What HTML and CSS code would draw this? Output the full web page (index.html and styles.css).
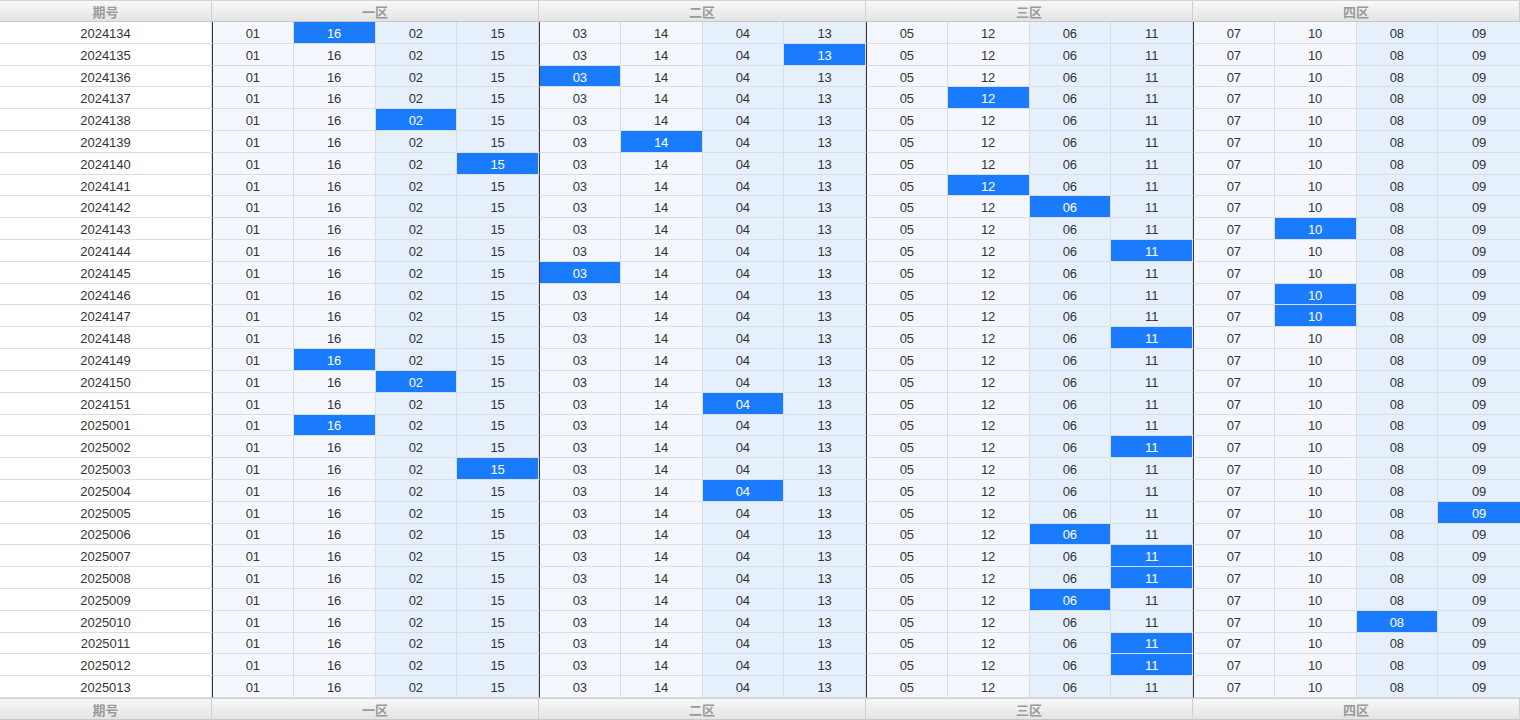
FILE: index.html
```html
<!DOCTYPE html>
<html lang="zh">
<head>
<meta charset="utf-8">
<title>分区走势</title>
<link rel="stylesheet" href="styles.css">
</head>
<body>
<div class="grid">
  <div class="row head">
    <span class="h">期号</span><span class="h g">一区</span><span class="h g">二区</span><span class="h g">三区</span><span class="h g">四区</span>
  </div>
  <div class="row"><span>2024134</span><span>01</span><span class="on">16</span><span>02</span><span>15</span><span>03</span><span>14</span><span>04</span><span>13</span><span>05</span><span>12</span><span>06</span><span>11</span><span>07</span><span>10</span><span>08</span><span>09</span></div>
  <div class="row"><span>2024135</span><span>01</span><span>16</span><span>02</span><span>15</span><span>03</span><span>14</span><span>04</span><span class="on">13</span><span>05</span><span>12</span><span>06</span><span>11</span><span>07</span><span>10</span><span>08</span><span>09</span></div>
  <div class="row"><span>2024136</span><span>01</span><span>16</span><span>02</span><span>15</span><span class="on">03</span><span>14</span><span>04</span><span>13</span><span>05</span><span>12</span><span>06</span><span>11</span><span>07</span><span>10</span><span>08</span><span>09</span></div>
  <div class="row"><span>2024137</span><span>01</span><span>16</span><span>02</span><span>15</span><span>03</span><span>14</span><span>04</span><span>13</span><span>05</span><span class="on">12</span><span>06</span><span>11</span><span>07</span><span>10</span><span>08</span><span>09</span></div>
  <div class="row"><span>2024138</span><span>01</span><span>16</span><span class="on">02</span><span>15</span><span>03</span><span>14</span><span>04</span><span>13</span><span>05</span><span>12</span><span>06</span><span>11</span><span>07</span><span>10</span><span>08</span><span>09</span></div>
  <div class="row"><span>2024139</span><span>01</span><span>16</span><span>02</span><span>15</span><span>03</span><span class="on">14</span><span>04</span><span>13</span><span>05</span><span>12</span><span>06</span><span>11</span><span>07</span><span>10</span><span>08</span><span>09</span></div>
  <div class="row"><span>2024140</span><span>01</span><span>16</span><span>02</span><span class="on">15</span><span>03</span><span>14</span><span>04</span><span>13</span><span>05</span><span>12</span><span>06</span><span>11</span><span>07</span><span>10</span><span>08</span><span>09</span></div>
  <div class="row"><span>2024141</span><span>01</span><span>16</span><span>02</span><span>15</span><span>03</span><span>14</span><span>04</span><span>13</span><span>05</span><span class="on">12</span><span>06</span><span>11</span><span>07</span><span>10</span><span>08</span><span>09</span></div>
  <div class="row"><span>2024142</span><span>01</span><span>16</span><span>02</span><span>15</span><span>03</span><span>14</span><span>04</span><span>13</span><span>05</span><span>12</span><span class="on">06</span><span>11</span><span>07</span><span>10</span><span>08</span><span>09</span></div>
  <div class="row"><span>2024143</span><span>01</span><span>16</span><span>02</span><span>15</span><span>03</span><span>14</span><span>04</span><span>13</span><span>05</span><span>12</span><span>06</span><span>11</span><span>07</span><span class="on">10</span><span>08</span><span>09</span></div>
  <div class="row"><span>2024144</span><span>01</span><span>16</span><span>02</span><span>15</span><span>03</span><span>14</span><span>04</span><span>13</span><span>05</span><span>12</span><span>06</span><span class="on">11</span><span>07</span><span>10</span><span>08</span><span>09</span></div>
  <div class="row"><span>2024145</span><span>01</span><span>16</span><span>02</span><span>15</span><span class="on">03</span><span>14</span><span>04</span><span>13</span><span>05</span><span>12</span><span>06</span><span>11</span><span>07</span><span>10</span><span>08</span><span>09</span></div>
  <div class="row"><span>2024146</span><span>01</span><span>16</span><span>02</span><span>15</span><span>03</span><span>14</span><span>04</span><span>13</span><span>05</span><span>12</span><span>06</span><span>11</span><span>07</span><span class="on">10</span><span>08</span><span>09</span></div>
  <div class="row"><span>2024147</span><span>01</span><span>16</span><span>02</span><span>15</span><span>03</span><span>14</span><span>04</span><span>13</span><span>05</span><span>12</span><span>06</span><span>11</span><span>07</span><span class="on">10</span><span>08</span><span>09</span></div>
  <div class="row"><span>2024148</span><span>01</span><span>16</span><span>02</span><span>15</span><span>03</span><span>14</span><span>04</span><span>13</span><span>05</span><span>12</span><span>06</span><span class="on">11</span><span>07</span><span>10</span><span>08</span><span>09</span></div>
  <div class="row"><span>2024149</span><span>01</span><span class="on">16</span><span>02</span><span>15</span><span>03</span><span>14</span><span>04</span><span>13</span><span>05</span><span>12</span><span>06</span><span>11</span><span>07</span><span>10</span><span>08</span><span>09</span></div>
  <div class="row"><span>2024150</span><span>01</span><span>16</span><span class="on">02</span><span>15</span><span>03</span><span>14</span><span>04</span><span>13</span><span>05</span><span>12</span><span>06</span><span>11</span><span>07</span><span>10</span><span>08</span><span>09</span></div>
  <div class="row"><span>2024151</span><span>01</span><span>16</span><span>02</span><span>15</span><span>03</span><span>14</span><span class="on">04</span><span>13</span><span>05</span><span>12</span><span>06</span><span>11</span><span>07</span><span>10</span><span>08</span><span>09</span></div>
  <div class="row"><span>2025001</span><span>01</span><span class="on">16</span><span>02</span><span>15</span><span>03</span><span>14</span><span>04</span><span>13</span><span>05</span><span>12</span><span>06</span><span>11</span><span>07</span><span>10</span><span>08</span><span>09</span></div>
  <div class="row"><span>2025002</span><span>01</span><span>16</span><span>02</span><span>15</span><span>03</span><span>14</span><span>04</span><span>13</span><span>05</span><span>12</span><span>06</span><span class="on">11</span><span>07</span><span>10</span><span>08</span><span>09</span></div>
  <div class="row"><span>2025003</span><span>01</span><span>16</span><span>02</span><span class="on">15</span><span>03</span><span>14</span><span>04</span><span>13</span><span>05</span><span>12</span><span>06</span><span>11</span><span>07</span><span>10</span><span>08</span><span>09</span></div>
  <div class="row"><span>2025004</span><span>01</span><span>16</span><span>02</span><span>15</span><span>03</span><span>14</span><span class="on">04</span><span>13</span><span>05</span><span>12</span><span>06</span><span>11</span><span>07</span><span>10</span><span>08</span><span>09</span></div>
  <div class="row"><span>2025005</span><span>01</span><span>16</span><span>02</span><span>15</span><span>03</span><span>14</span><span>04</span><span>13</span><span>05</span><span>12</span><span>06</span><span>11</span><span>07</span><span>10</span><span>08</span><span class="on">09</span></div>
  <div class="row"><span>2025006</span><span>01</span><span>16</span><span>02</span><span>15</span><span>03</span><span>14</span><span>04</span><span>13</span><span>05</span><span>12</span><span class="on">06</span><span>11</span><span>07</span><span>10</span><span>08</span><span>09</span></div>
  <div class="row"><span>2025007</span><span>01</span><span>16</span><span>02</span><span>15</span><span>03</span><span>14</span><span>04</span><span>13</span><span>05</span><span>12</span><span>06</span><span class="on">11</span><span>07</span><span>10</span><span>08</span><span>09</span></div>
  <div class="row"><span>2025008</span><span>01</span><span>16</span><span>02</span><span>15</span><span>03</span><span>14</span><span>04</span><span>13</span><span>05</span><span>12</span><span>06</span><span class="on">11</span><span>07</span><span>10</span><span>08</span><span>09</span></div>
  <div class="row"><span>2025009</span><span>01</span><span>16</span><span>02</span><span>15</span><span>03</span><span>14</span><span>04</span><span>13</span><span>05</span><span>12</span><span class="on">06</span><span>11</span><span>07</span><span>10</span><span>08</span><span>09</span></div>
  <div class="row"><span>2025010</span><span>01</span><span>16</span><span>02</span><span>15</span><span>03</span><span>14</span><span>04</span><span>13</span><span>05</span><span>12</span><span>06</span><span>11</span><span>07</span><span>10</span><span class="on">08</span><span>09</span></div>
  <div class="row"><span>2025011</span><span>01</span><span>16</span><span>02</span><span>15</span><span>03</span><span>14</span><span>04</span><span>13</span><span>05</span><span>12</span><span>06</span><span class="on">11</span><span>07</span><span>10</span><span>08</span><span>09</span></div>
  <div class="row"><span>2025012</span><span>01</span><span>16</span><span>02</span><span>15</span><span>03</span><span>14</span><span>04</span><span>13</span><span>05</span><span>12</span><span>06</span><span class="on">11</span><span>07</span><span>10</span><span>08</span><span>09</span></div>
  <div class="row"><span>2025013</span><span>01</span><span>16</span><span>02</span><span>15</span><span>03</span><span>14</span><span>04</span><span>13</span><span>05</span><span>12</span><span>06</span><span>11</span><span>07</span><span>10</span><span>08</span><span>09</span></div>
  <div class="row head">
    <span class="h">期号</span><span class="h g">一区</span><span class="h g">二区</span><span class="h g">三区</span><span class="h g">四区</span>
  </div>
</div>
</body>
</html>
```
FILE: styles.css
```css
html, body {
  margin: 0;
  padding: 0;
  background: #fff;
}
body {
  font-family: "Liberation Sans", Arial, "Noto Sans CJK SC", sans-serif;
  font-size: 13px;
  color: #333;
}
.grid {
  display: grid;
  grid-template-columns: 212px repeat(16, 1fr);
  grid-template-rows: 22px repeat(31, 1fr) 22px;
  width: 1520px;
  height: 720px;
  overflow: hidden;
}
.row {
  display: contents;
}
.row > span {
  display: flex;
  align-items: center;
  justify-content: center;
  box-sizing: border-box;
  padding-top: 2px;
  border-bottom: 1px solid #d8dee6;
  border-right: 1px solid #d8dee6;
  background: #fff;
  white-space: nowrap;
}
.row > span:nth-child(4n+2),
.row > span:nth-child(4n+3) {
  background: #f4f8fe;
}
.row > span:nth-child(4n),
.row > span:nth-child(4n+5) {
  background: #e6f0fc;
}
.row > span:nth-child(4n+2) {
  border-left: 1px solid #333;
}
.row > span:last-child {
  border-right: none;
}
.row > span.on {
  background: #1a7bff;
  color: #fff;
}
.head > span.h {
  padding-top: 0;
  background: linear-gradient(#f8f8f8, #e4e4e4);
  border-left: none;
  border-top: 1px solid #d2d2d2;
  border-bottom: 1px solid #c8c8c8;
  border-right: 1px solid #d0d0d0;
  font-family: "Noto Sans CJK SC", "Liberation Sans", sans-serif;
  font-weight: bold;
  font-size: 13px;
  color: #9a9a9a;
}
.head > span.g {
  grid-column: span 4;
}
```
